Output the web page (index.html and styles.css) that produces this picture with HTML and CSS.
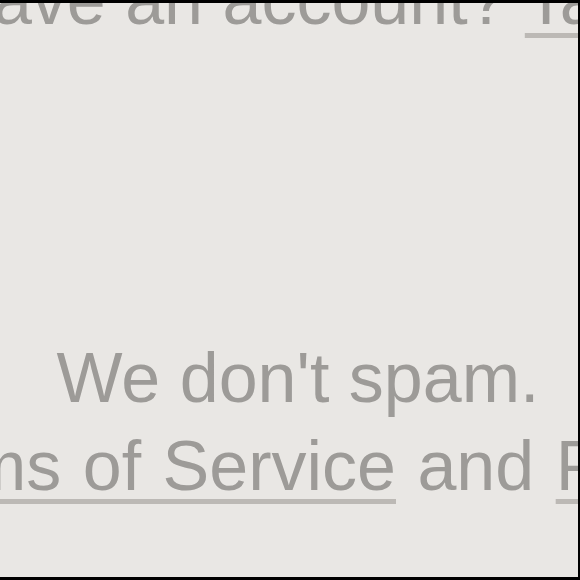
FILE: index.html
```html
<!DOCTYPE html>
<html>
<head>
	<title>Sign up</title>
	<meta name="viewport" content="width=device-width, initial-scale=1.0">
	<link rel="stylesheet" href="styles.css">
</head>
<body>
	<div class="frame">
		<div class="page">
			<p class="login">Already have an account? <a href="#">Tap to login</a></p>
			<div class="note">
				<p>We don't spam.</p>
				<p class="terms">See our <a href="#">Terms of Service</a> and <a href="#">Privacy Policy</a>.</p>
			</div>
		</div>
	</div>
</body>
</html>
```

FILE: styles.css
```css
html, body {
	margin: 0;
	padding: 0;
	background: #000;
}

.frame {
	box-sizing: border-box;
	width: 580px;
	height: 580px;
	overflow: hidden;
	border-top: 3px solid #000;
	border-bottom: 3px solid #000;
	border-right: 2px solid #000;
	background: #e9e7e4;
}

/* wide column, centred a little right of the window */
.page {
	width: 2000px;
	margin-left: -702px;
	text-align: center;
	font-family: "Liberation Sans", Arial, sans-serif;
	font-size: 70px;
	line-height: 88px;
	color: #9d9b98;
	white-space: nowrap;
}

.page p {
	margin: 0;
}

.page a {
	color: inherit;
	text-decoration: underline;
	text-decoration-color: #bcb9b5;
	text-decoration-thickness: 5px;
	text-underline-offset: 9px;
	text-decoration-skip-ink: none;
}

.page .login {
	margin-top: -47px;
	padding-right: 16px;
}

.note {
	margin-top: 290px;
}

.page .terms {
	padding-left: 15px;
	word-spacing: 2px;
}
```
